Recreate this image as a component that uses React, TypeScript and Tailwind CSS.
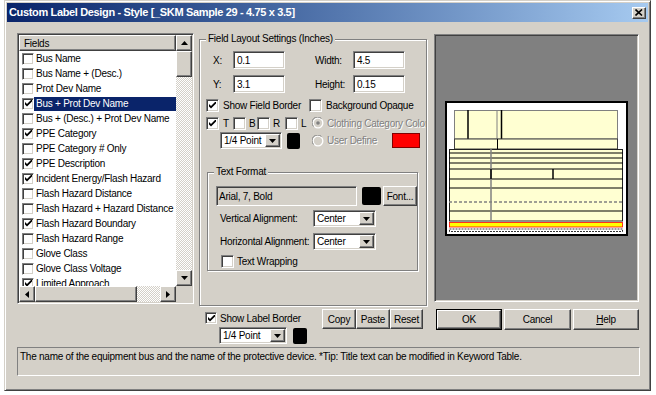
import React from "react"

const raised =
  "border border-t-white border-l-white border-r-[#404040] border-b-[#404040] shadow-[inset_-1px_-1px_0_#808080]"
const sunken =
  "border border-t-[#808080] border-l-[#808080] border-r-white border-b-white shadow-[inset_1px_1px_0_#404040,inset_-1px_-1px_0_#d4d0c8]"
const etched = "border border-[#808080] shadow-[inset_1px_1px_0_#fff,1px_1px_0_#fff]"
const hatch = "bg-[repeating-conic-gradient(#ffffff_0_25%,#d4d0c8_0_50%)] bg-[length:2px_2px]"
const dim = "text-[#808080] [text-shadow:1px_1px_0_#fff]"

const FIELDS: [string, boolean][] = [
  ["Bus Name", false],
  ["Bus Name + (Desc.)", false],
  ["Prot Dev Name", false],
  ["Bus + Prot Dev Name", true],
  ["Bus + (Desc.) + Prot Dev Name", false],
  ["PPE Category", true],
  ["PPE Category # Only", false],
  ["PPE Description", true],
  ["Incident Energy/Flash Hazard", true],
  ["Flash Hazard Distance", false],
  ["Flash Hazard + Hazard Distance", false],
  ["Flash Hazard Boundary", true],
  ["Flash Hazard Range", false],
  ["Glove Class", false],
  ["Glove Class Voltage", false],
  ["Limited Approach", true],
]

function Arrow({ dir }: { dir: "up" | "down" | "left" | "right" }) {
  const pts = {
    up: "0,4 7,4 3.5,0",
    down: "0,0 7,0 3.5,4",
    left: "4,0 4,7 0,3.5",
    right: "0,0 0,7 4,3.5",
  }[dir]
  const vertical = dir === "up" || dir === "down"
  return (
    <svg width={vertical ? 7 : 4} height={vertical ? 4 : 7} viewBox={vertical ? "0 0 7 4" : "0 0 4 7"}>
      <polygon points={pts} fill="#000" />
    </svg>
  )
}

function Check({ on, size = "w-[13px] h-[13px]" }: { on: boolean; size?: string }) {
  return (
    <div className={`${sunken} ${size} bg-white flex items-center justify-center shrink-0`}>
      {on && (
        <svg width="7" height="7" viewBox="0 0 7 7">
          <polygon points="0,2 2,4 7,-1 7,1.6 2,6.6 0,4.6" fill="#000" />
        </svg>
      )}
    </div>
  )
}

function Radio({ on }: { on: boolean }) {
  return (
    <svg width="12" height="12" viewBox="0 0 12 12" className="shrink-0">
      <circle cx="6" cy="6" r="5.5" fill="#ffffff" />
      <path d="M1.6 9.5 A5 5 0 0 1 9.5 1.6" fill="none" stroke="#808080" strokeWidth="1" />
      <circle cx="6" cy="6" r="4.2" fill="#d4d0c8" />
      {on && <circle cx="6" cy="6" r="1.8" fill="#808080" />}
    </svg>
  )
}

function Select({ className, value }: { className: string; value: string }) {
  return (
    <div className={`${sunken} bg-white flex items-center p-[1px] ${className}`}>
      <span className="flex-1 pl-[2px] leading-none whitespace-nowrap">{value}</span>
      <div className={`${raised} bg-[#d4d0c8] w-[15px] h-full flex items-center justify-center`}>
        <Arrow dir="down" />
      </div>
    </div>
  )
}

function Button({ className, children }: { className: string; children: React.ReactNode }) {
  return (
    <div className={`${raised} bg-[#d4d0c8] flex items-center justify-center ${className}`}>{children}</div>
  )
}

function ScrollBtn({ dir }: { dir: "up" | "down" | "left" | "right" }) {
  return (
    <div className={`${raised} bg-[#d4d0c8] w-[16px] h-[16px] flex items-center justify-center shrink-0`}>
      <Arrow dir={dir} />
    </div>
  )
}

function FieldList() {
  return (
    <div className={`${sunken} w-[177px] h-[271px] bg-white p-[1px] flex shrink-0`}>
      <div className="w-[157px] flex flex-col">
        <div className="flex-1 overflow-hidden">
          <div className={`${raised} bg-[#d4d0c8] h-[16px] flex items-center pl-[4px]`}>Fields</div>
          {FIELDS.map(([name, on], i) => (
            <div key={name} className="h-[15px] flex items-center">
              <div className="ml-[3px]">
                <Check on={on} size="w-[12px] h-[12px]" />
              </div>
              <div
                className={`h-[14px] flex-1 flex items-center pl-[2px] whitespace-nowrap ${
                  i === 3 ? "bg-[#0a246a] text-white" : ""
                }`}
              >
                {name}
              </div>
            </div>
          ))}
        </div>
        <div className="h-[16px] flex">
          <ScrollBtn dir="left" />
          <div className={`${raised} bg-[#d4d0c8] w-[102px] h-[16px]`} />
          <div className={`flex-1 ${hatch}`} />
          <ScrollBtn dir="right" />
        </div>
      </div>
      <div className="w-[16px] flex flex-col">
        <ScrollBtn dir="up" />
        <div className={`${raised} bg-[#d4d0c8] w-[16px] h-[26px]`} />
        <div className={`flex-1 ${hatch}`} />
        <ScrollBtn dir="down" />
        <div className="h-[16px] bg-[#d4d0c8]" />
      </div>
    </div>
  )
}

function Group({ title, className, children }: { title: string; className: string; children: React.ReactNode }) {
  return (
    <div className={`relative shrink-0 ${etched} ${className}`}>
      <div className="absolute -top-[7px] left-[6px] bg-[#d4d0c8] px-[2px] leading-[12px] whitespace-nowrap">
        {title}
      </div>
      {children}
    </div>
  )
}

function LayoutSettings() {
  return (
    <Group title="Field Layout Settings (Inches)" className="ml-[5px] mt-[6px] w-[228px] h-[267px]">
      <div className="pt-[11px] pl-[13px] flex items-center h-[29px]">
        <span className="w-[20px]">X:</span>
        <div className={`${sunken} bg-white w-[52px] h-[18px] flex items-center pl-[3px]`}>0.1</div>
        <span className="ml-[30px] w-[38px]">Width:</span>
        <div className={`${sunken} bg-white w-[52px] h-[18px] flex items-center pl-[3px]`}>4.5</div>
      </div>
      <div className="mt-[6px] pl-[13px] flex items-center h-[18px]">
        <span className="w-[20px]">Y:</span>
        <div className={`${sunken} bg-white w-[52px] h-[18px] flex items-center pl-[3px]`}>3.1</div>
        <span className="ml-[30px] w-[38px]">Height:</span>
        <div className={`${sunken} bg-white w-[52px] h-[18px] flex items-center pl-[3px]`}>0.15</div>
      </div>
      <div className="mt-[6px] pl-[6px] flex items-center h-[13px] whitespace-nowrap">
        <div className="w-[103px] flex items-center gap-[4px]">
          <Check on />
          <span>Show Field Border</span>
        </div>
        <div className="flex items-center gap-[4px]">
          <Check on={false} />
          <span>Background Opaque</span>
        </div>
      </div>
      <div className="mt-[4px] pl-[6px] w-[226px] overflow-hidden flex items-center h-[14px] whitespace-nowrap">
        <div className="w-[27px] flex items-center gap-[4px] shrink-0">
          <Check on />
          <span>T</span>
        </div>
        <div className="w-[24px] flex items-center gap-[3px] shrink-0">
          <Check on={false} />
          <span>B</span>
        </div>
        <div className="w-[28px] flex items-center gap-[3px] shrink-0">
          <Check on={false} />
          <span>R</span>
        </div>
        <div className="w-[27px] flex items-center gap-[3px] shrink-0">
          <Check on={false} />
          <span>L</span>
        </div>
        <div className="flex items-center gap-[3px] shrink-0">
          <Radio on />
          <span className={dim}>Clothing Category Color</span>
        </div>
      </div>
      <div className="mt-[2px] pl-[20px] flex items-center h-[17px] whitespace-nowrap">
        <Select className="w-[62px] h-[17px]" value="1/4 Point" />
        <div className="ml-[5px] w-[13px] h-[16px] bg-black rounded-[2px]" />
        <div className="ml-[12px] flex items-center gap-[3px]">
          <Radio on={false} />
          <span className={dim}>User Define</span>
        </div>
        <div className="ml-[15px] w-[28px] h-[15px] bg-[#ff0000] border border-[#800000]" />
      </div>
      <Group title="Text Format" className="ml-[7px] mt-[23px] w-[211px] h-[99px]">
        <div className="pt-[13px] pl-[8px] flex items-center">
          <div className={`${sunken} bg-[#d4d0c8] w-[141px] h-[20px] flex items-center pl-[2px]`}>Arial, 7, Bold</div>
          <div className="ml-[5px] w-[19px] h-[18px] bg-black rounded-[2px]" />
          <Button className="ml-[2px] w-[34px] h-[20px]">Font...</Button>
        </div>
        <div className="mt-[4px] pl-[12px] flex items-center h-[17px] whitespace-nowrap">
          <span className="w-[93px]">Vertical Alignment:</span>
          <Select className="w-[63px] h-[17px]" value="Center" />
        </div>
        <div className="mt-[6px] pl-[12px] flex items-center h-[17px] whitespace-nowrap">
          <span className="w-[93px]">Horizontal Alignment:</span>
          <Select className="w-[63px] h-[17px]" value="Center" />
        </div>
        <div className="mt-[5px] pl-[13px] flex items-center gap-[3px] h-[13px]">
          <Check on={false} />
          <span>Text Wrapping</span>
        </div>
      </Group>
    </Group>
  )
}

function Preview() {
  const rows = [153, 158, 163, 169, 179, 188, 211]
  return (
    <div className={`${sunken} ml-[7px] mt-[1px] w-[205px] h-[268px] bg-[#808080] shrink-0`}>
      <svg width="203" height="266" viewBox="435 35 203 266">
        <rect x="446" y="102" width="181" height="133" fill="#fff" stroke="#000" strokeWidth="2" />
        <rect x="454.5" y="110.5" width="163" height="28.5" fill="#ffffd2" stroke="#808080" />
        <line x1="468" y1="110" x2="468" y2="139" stroke="#000" strokeWidth="1.5" />
        <line x1="497" y1="110" x2="497" y2="139" stroke="#808080" strokeWidth="1" />
        <line x1="501.5" y1="110" x2="501.5" y2="139" stroke="#000" strokeWidth="1.5" />
        <rect x="454.5" y="139" width="163" height="10" fill="#ffffd2" stroke="#404040" />
        <line x1="497.5" y1="139" x2="497.5" y2="149" stroke="#000" />
        <rect x="449.5" y="149.5" width="173" height="71.5" fill="#ffffd2" stroke="#202020" />
        {rows.map((y) => (
          <line key={y} x1="449" y1={y} x2="623" y2={y} stroke="#000" strokeWidth="1.2" />
        ))}
        <line x1="449" y1="202" x2="623" y2="202" stroke="#808080" strokeWidth="1.5" strokeDasharray="3 2" />
        <line x1="491" y1="149" x2="491" y2="221" stroke="#808080" strokeWidth="1.5" />
        <line x1="491" y1="169" x2="491" y2="179" stroke="#000" strokeWidth="1.5" />
        <line x1="553" y1="169" x2="553" y2="179" stroke="#000" strokeWidth="1.5" />
        <rect x="449.5" y="222.5" width="173" height="4.5" fill="#ffff00" stroke="#ff0000" strokeWidth="0.8" />
        <rect x="449.5" y="229" width="173" height="2.5" fill="#fff" stroke="#000" strokeWidth="0.8" strokeDasharray="2 1" />
      </svg>
    </div>
  )
}

export default function App() {
  return (
    <div className="w-[656px] h-[395px] bg-white overflow-hidden font-['Liberation_Sans',Arial,sans-serif] text-[10px] tracking-[-0.25px] text-black">
      <div className="ml-[4px] w-[647px] h-[391px] bg-[#d4d0c8] border border-t-[#d4d0c8] border-l-[#d4d0c8] border-r-[#404040] border-b-[#404040] shadow-[inset_1px_1px_0_#fff,inset_-1px_-1px_0_#808080] p-[2px] flex flex-col">
        <div className="h-[19px] bg-linear-to-r from-[#0a246a] to-[#a6caf0] flex items-center pl-[2px]">
          <span className="flex-1 text-white font-bold text-[11px] tracking-[-0.35px] whitespace-nowrap">
            Custom Label Design - Style [_SKM Sample 29 - 4.75 x 3.5]
          </span>
          <div className={`${raised} bg-[#d4d0c8] w-[14px] h-[12px] mr-[2px] flex items-center justify-center`}>
            <svg width="8" height="7" viewBox="0 0 8 7">
              <path d="M0.5 0.5 L7 6.5 M7 0.5 L0.5 6.5" stroke="#000" strokeWidth="1.6" />
            </svg>
          </div>
        </div>

        <div className="mt-[11px] pl-[10px] flex items-start h-[273px]">
          <FieldList />
          <LayoutSettings />
          <Preview />
        </div>

        <div className="mt-[2px] pl-[198px] flex h-[36px]">
          <div className="w-[117px] pt-[4px] whitespace-nowrap">
            <div className="flex items-center gap-[3px] h-[12px]">
              <Check on size="w-[12px] h-[12px]" />
              <span>Show Label Border</span>
            </div>
            <div className="mt-[3px] ml-[14px] flex items-center">
              <Select className="w-[68px] h-[17px]" value="1/4 Point" />
              <div className="ml-[6px] w-[14px] h-[16px] bg-black rounded-[2px]" />
            </div>
          </div>
          <div className="pt-[1px] flex">
            <Button className="w-[34px] h-[20px]">Copy</Button>
            <Button className="w-[34px] h-[20px]">Paste</Button>
            <Button className="w-[33px] h-[20px]">Reset</Button>
          </div>
          <div className="ml-[13px] pt-[1px] flex gap-[2px]">
            <div className="w-[66px] h-[21px] border border-black">
              <Button className="w-full h-full">OK</Button>
            </div>
            <Button className="w-[67px] h-[21px]">Cancel</Button>
            <Button className="w-[66px] h-[21px]">
              <span>
                <span className="underline">H</span>elp
              </span>
            </Button>
          </div>
        </div>

        <div className="mt-[3px] ml-[10px] w-[623px] h-[29px] border border-t-[#808080] border-l-[#808080] border-r-white border-b-white pl-[2px] pt-[1px] whitespace-nowrap">
          The name of the equipment bus and the name of the protective device. *Tip: Title text can be modified in Keyword Table.
        </div>
      </div>
    </div>
  )
}
